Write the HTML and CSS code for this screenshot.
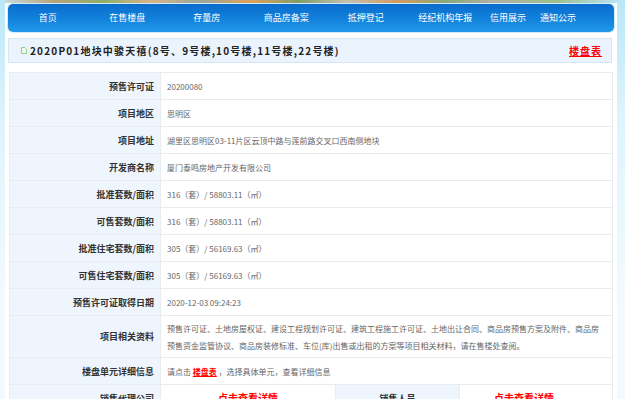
FILE: index.html
```html
<!DOCTYPE html>
<html lang="zh-CN">
<head>
<meta charset="utf-8">
<title>2020P01地块中骏天禧</title>
<link rel="stylesheet" href="styles.css">
</head>
<body>
<div class="page">
  <div class="banner"></div>
  <nav class="nav">
    <ul class="nav-list">
      <li class="nav-item"><a>首页</a></li>
      <li class="nav-item"><a>在售楼盘</a></li>
      <li class="nav-item"><a>存量房</a></li>
      <li class="nav-item"><a>商品房备案</a></li>
      <li class="nav-item"><a>抵押登记</a></li>
      <li class="nav-item"><a>经纪机构年报</a></li>
      <li class="nav-item nav-item-credit"><a>信用展示</a></li>
      <li class="nav-item nav-item-notice"><a>通知公示</a></li>
    </ul>
  </nav>
  <div class="title-bar">
    <span class="title">
      <svg class="title-icon" width="6" height="7" viewBox="0 0 6 7"><path d="M0.5 0.5H4L5.5 2V6.5H0.5Z" fill="#f1faee" stroke="#8fd08a" stroke-width="1"/></svg>
      2020P01地块中骏天禧(8号、9号楼,10号楼,11号楼,22号楼)
    </span>
    <a class="red-link title-link">楼盘表</a>
  </div>
  <table class="info">
    <colgroup>
      <col class="c1"><col class="c2"><col class="c3"><col class="c4">
    </colgroup>
    <tr><th>预售许可证</th><td colspan="3">20200080</td></tr>
    <tr><th>项目地区</th><td colspan="3">思明区</td></tr>
    <tr><th>项目地址</th><td colspan="3">湖里区思明区03-11片区云顶中路与莲前路交叉口西南侧地块</td></tr>
    <tr><th>开发商名称</th><td colspan="3">厦门泰鸣房地产开发有限公司</td></tr>
    <tr><th>批准套数/面积</th><td colspan="3">316（套）/ 58803.11（㎡）</td></tr>
    <tr><th>可售套数/面积</th><td colspan="3">316（套）/ 58803.11（㎡）</td></tr>
    <tr><th>批准住宅套数/面积</th><td colspan="3">305（套）/ 56169.63（㎡）</td></tr>
    <tr><th>可售住宅套数/面积</th><td colspan="3">305（套）/ 56169.63（㎡）</td></tr>
    <tr><th>预售许可证取得日期</th><td colspan="3">2020-12-03 09:24:23</td></tr>
    <tr class="tall"><th>项目相关资料</th><td colspan="3">预售许可证、土地房屋权证、建设工程规划许可证、建筑工程施工许可证、土地出让合同、商品房预售方案及附件、商品房预售资金监管协议、商品房装修标准、车位(库)出售或出租的方案等项目相关材料，请在售楼处查阅。</td></tr>
    <tr><th>楼盘单元详细信息</th><td colspan="3">请点击 <a class="red-link">楼盘表</a> ，选择具体单元，查看详细信息</td></tr>
    <tr><th>销售代理公司</th><td class="center"><a class="red-bold">点击查看详情</a></td><th class="center">销售人员</th><td class="center last-cell"><a class="red-bold">点击查看详情</a></td></tr>
  </table>
</div>
</body>
</html>
```

FILE: styles.css
```css
html, body {
  margin: 0;
  padding: 0;
}
body {
  background: linear-gradient(to bottom, #b9e7f8 0px, #dff4fc 120px, #f2fafe 300px);
  font-family: "Noto Sans CJK SC", "Liberation Sans", sans-serif;
  overflow: hidden;
}
.page {
  width: 612px;
  margin-left: 5px;
  background: #ffffff;
  min-height: 420px;
}
.banner {
  height: 3px;
  background: linear-gradient(to right, #c8dcd8 0%, #b9a27a 8%, #8fae6c 16%, #d8b48a 24%, #9aa79a 32%, #e2a05a 40%, #7f9f69 48%, #c7c0b0 56%, #d59a5f 64%, #88a978 72%, #b5b0a2 80%, #9cc08a 90%, #b9e1f3 100%);
}
.nav {
  margin: 1px 3px 0 3px;
  height: 28px;
  border-radius: 5px;
  background: linear-gradient(to bottom, #0a6ccd 0%, #1282dc 55%, #239ae9 100%);
  box-shadow: 0 0 0 1px #d3ecfa;
}
.nav-list {
  list-style: none;
  margin: 0;
  padding: 0;
  display: flex;
  height: 28px;
  align-items: center;
}
.nav-item {
  width: 79.5px;
  text-align: center;
  color: #ffffff;
  font-size: 9px;
  line-height: 28px;
}
.nav-item-credit {
  width: 46px;
}
.nav-item-notice {
  width: 54px;
}
.title-bar {
  margin: 6px 5px 0 3px;
  height: 23px;
  border: 1px solid #d5e5f4;
  background: #ebf3fc;
  display: flex;
  align-items: center;
  justify-content: space-between;
  padding: 0 9px 0 12px;
}
.title {
  display: flex;
  align-items: center;
  font-size: 10px;
  font-weight: bold;
  color: #222222;
  letter-spacing: 1.2px;
}
.title-icon {
  margin-right: 3px;
}
.red-link {
  color: #ff0000;
  font-weight: bold;
  text-decoration: underline;
}
.title-link {
  font-size: 10px;
  letter-spacing: 1px;
}
.red-bold {
  color: #ff0000;
  font-weight: bold;
  font-size: 10px;
}
.info {
  margin: 9px 0 0 4px;
  width: 603px;
  border-collapse: collapse;
  table-layout: fixed;
}
.c1 { width: 151px; }
.c2 { width: 175px; }
.c3 { width: 124px; }
.c4 { width: 153px; }
.info th,
.info td {
  border: 1px solid #e9ecef;
  height: 26px;
  padding: 0 6px;
  vertical-align: middle;
}
.info th {
  background: #eef5fd;
  text-align: right;
  font-size: 9px;
  font-weight: bold;
  color: #333333;
}
.info td {
  background: #ffffff;
  font-size: 8px;
  color: #666666;
  line-height: 17px;
  text-align: left;
}
.info .tall th,
.info .tall td {
  height: 41px;
  padding-top: 0;
  padding-bottom: 0;
}
.info .center {
  text-align: center;
}
.info .last-cell {
  padding-right: 30px;
}
```
